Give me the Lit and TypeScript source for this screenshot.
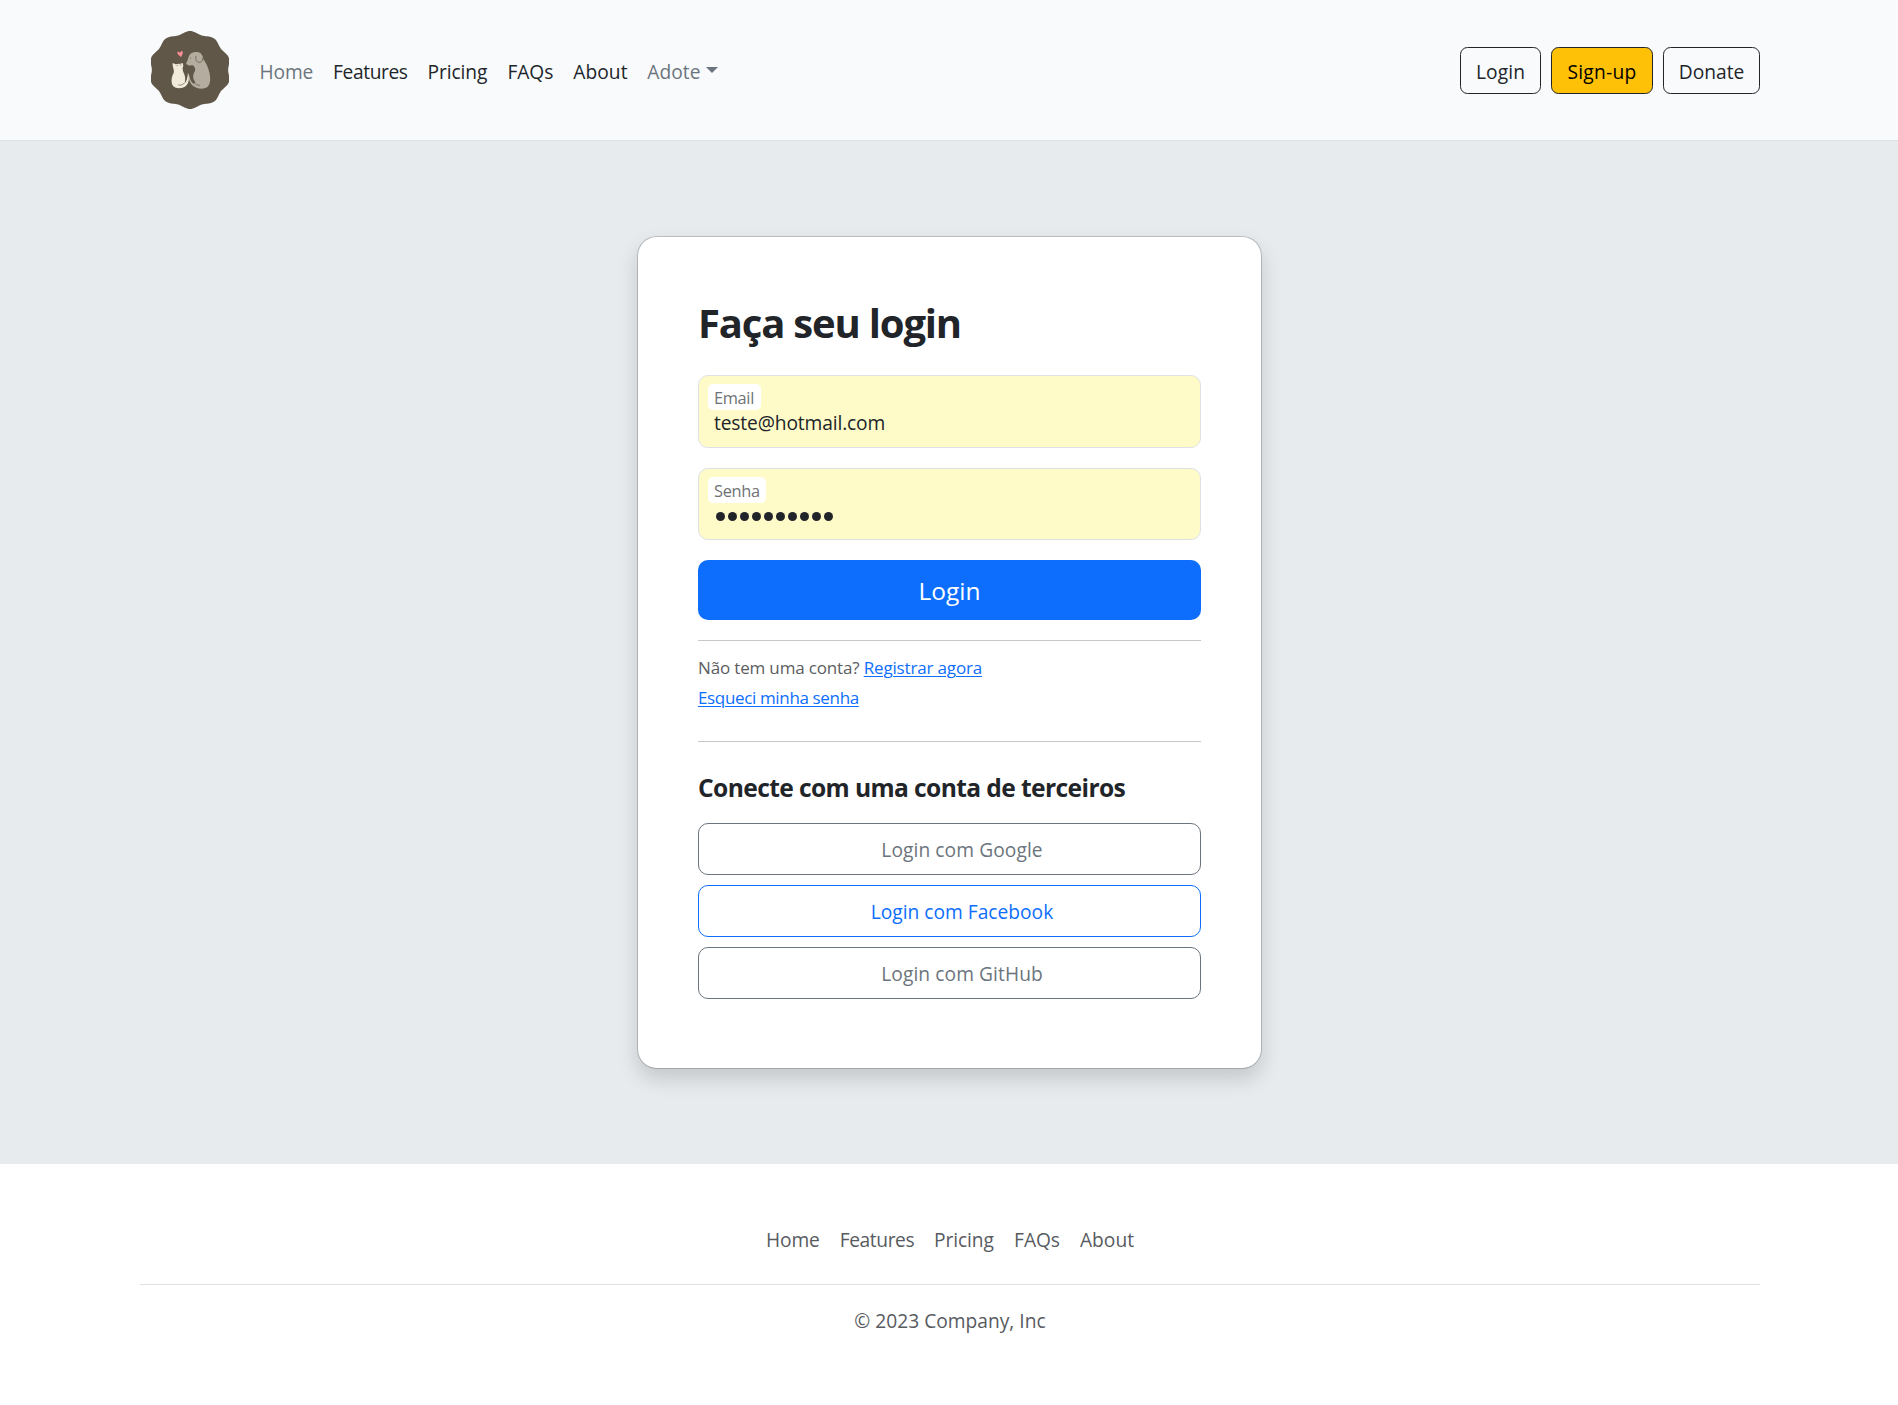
import { LitElement, html, svg, css } from "lit";
import { customElement } from "lit/decorators.js";

// Outline of the ten-lobed badge, centred on (150, 150) and slightly wider than a circle.
const badge = (() => {
  const points: string[] = [];
  for (let i = 0; i < 180; i++) {
    const t = (i / 180) * Math.PI * 2;
    const r = 113 + 4 * Math.cos(10 * t);
    points.push(`${(150 + 1.05 * r * Math.sin(t)).toFixed(2)},${(150 - r * Math.cos(t)).toFixed(2)}`);
  }
  return points.join(" ");
})();

@customElement("pet-logo")
export class PetLogo extends LitElement {
  static styles = css`
    :host { display: block; width: 78px; height: 78px; }
    svg { display: block; width: 78px; height: 78px; }
  `;
  render() {
    return html`<svg viewBox="33 33 234 234" aria-hidden="true">
      ${svg`
        <polygon points=${badge} fill="#605749"></polygon>
        <path fill="#fd8d97" d="M123 112 C119 106 112 103 112 98 C112 94 118 94 120 99 C122 93 126 91 128 95 C130 101 125 106 123 112Z"></path>
        <path fill="#b5aca0" d="M138 128 C144 124 144 113 148 106 C154 96 166 94 176 97 C185 100 189 108 190 118 C198 128 204 142 208 157 C213 178 211 194 201 202 C194 207 180 207 171 204 C154 199 144 182 145 160 C149 165 149 180 157 188 C161 192 165 191 166 187 C157 175 158 164 165 153 C167 146 164 140 158 136 C151 137 140 137 138 128Z"></path>
        <path fill="none" stroke="#605749" stroke-width="2.2" d="M168 108 C165 118 170 127 177 127 C184 128 188 122 188 114"></path>
        <path fill="none" stroke="#605749" stroke-width="2" d="M160 180 C162 192 171 196 180 196"></path>
        <circle cx="152" cy="114" r="1.5" fill="#605749"></circle>
        <circle cx="139" cy="125" r="2" fill="#605749"></circle>
        <path fill="#f1e9da" d="M98 129 L105 132 C110 134 115 130 119 132 L128 129 L130 138 C127 142 127 150 131 158 C136 168 137 178 134 190 C141 183 142 174 144 159 C149 174 147 190 137 199 C127 207 107 207 100 199 C92 189 94 171 101 159 C104 150 97 143 98 129Z"></path>
        <path fill="none" stroke="#605749" stroke-width="2" d="M134 188 C129 195 122 196 115 195"></path>
        <path fill="none" stroke="#605749" stroke-width="1.8" d="M110 137 L114 136 M119 134 L124 136"></path>
      `}
    </svg>`;
  }
}

@customElement("app-root")
export class AppRoot extends LitElement {
  static styles = css`
    :host {
      display: block;
      height: 1405px;
      overflow: hidden;
      background: #fff;
      color: #212529;
      font: 400 19.2px/30px "Open Sans", "Noto Sans", sans-serif;
    }
    * { box-sizing: border-box; }
    a { color: inherit; text-decoration: none; }
    h1, h2, p { margin: 0; }
    .header {
      height: 141px;
      padding: 0 138px 0 151px;
      display: flex;
      align-items: center;
      background: #f8fafc;
      border-bottom: 1px solid #dee2e6;
    }
    .nav { display: flex; margin-left: 20.5px; padding-top: 3px; white-space: nowrap; }
    .nav a { padding: 0 10px; }
    .muted { color: #6c757d; }
    .w-home { width: 73.6px; letter-spacing: -0.15px; }
    .w-features { width: 94.4px; letter-spacing: -0.4px; }
    .w-pricing { width: 80px; letter-spacing: -0.1px; }
    .w-faqs { width: 65.8px; letter-spacing: -0.1px; }
    .w-about { width: 74px; letter-spacing: 0.05px; }
    .w-adote { display: flex; letter-spacing: 0.05px; }
    .caret {
      margin: 10px 0 0 5px;
      width: 12px;
      height: 6px;
      border: 6px solid transparent;
      border-top-color: #6c757d;
      border-bottom: 0;
    }
    .actions { display: flex; gap: 10px; margin-left: auto; }
    .btn {
      display: flex;
      align-items: center;
      justify-content: center;
      border: 1px solid #212529;
      border-radius: 7.5px;
      background: none;
      color: #212529;
      padding: 3px 0 0;
      font: inherit;
      height: 47px;
      white-space: nowrap;
    }
    .b-login { width: 81px; letter-spacing: 0.1px; }
    .b-signup { width: 102px; background: #ffc107; color: #000; letter-spacing: 0.25px; }
    .b-donate { width: 97px; }
    .main {
      height: 1023px;
      padding: 95px 0 0 1px;
      display: flex;
      justify-content: center;
      align-items: flex-start;
      background: #e7ebee;
    }
    .card {
      width: 625px;
      height: 832.5px;
      padding: 60px;
      background: #fff;
      background-clip: padding-box;
      border: 1px solid rgba(0, 0, 0, 0.175);
      border-radius: 20px;
      box-shadow: 0 10px 20px rgba(0, 0, 0, 0.15);
    }
    h1 { font-size: 40px; font-weight: 700; line-height: 52px; height: 78px; white-space: nowrap; letter-spacing: -1.18px; }
    .field {
      display: flex;
      flex-direction: column;
      align-items: flex-start;
      padding: 8px 0 0 9px;
      border: 1px solid #dee2e6;
      border-radius: 10px;
      background: #fffbc8;
      margin-bottom: 20px;
    }
    .email { height: 73px; }
    .senha { height: 72px; }
    .label {
      height: 26px;
      padding: 1px 0 0 6px;
      border-radius: 5px;
      background: #fff;
      color: #6f7275;
      font-size: 16.4px;
      line-height: 26px;
      white-space: nowrap;
    }
    .email .label { width: 53px; letter-spacing: -0.35px; }
    .senha .label { width: 58px; letter-spacing: -0.3px; }
    .value { padding-left: 6px; line-height: 26px; letter-spacing: -0.13px; }
    .dots { display: flex; gap: 3.1px; padding: 9px 0 0 7.5px; }
    .dot { width: 9px; height: 9px; border-radius: 50%; background: #212529; }
    .submit {
      display: block;
      width: 100%;
      height: 60px;
      border: 0;
      border-radius: 10px;
      background: #0d6efd;
      color: #fff;
      font: 400 24.5px/38px "Open Sans", "Noto Sans", sans-serif;
      padding: 1px 0 0;
    }
    .rule { height: 1px; background: #c7c8c9; }
    .rule.first { margin-top: 20px; }
    .small { padding-top: 12px; height: 100px; font-size: 17px; line-height: 30px; color: #5b5d60; white-space: nowrap; }
    .small a { color: #0d6efd; text-decoration: underline; text-decoration-thickness: 1px; text-underline-offset: 2px; }
    .l1 { letter-spacing: -0.16px; }
    .l2 { letter-spacing: -0.35px; }
    h2 { font-size: 24.6px; font-weight: 700; line-height: 30px; padding-top: 31px; height: 81px; white-space: nowrap; letter-spacing: -0.61px; }
    .social { display: flex; flex-direction: column; gap: 10px; }
    .social .btn { width: 100%; height: 52px; border-radius: 10px; border-color: #6c757d; color: #6c757d; padding: 1px 0 0 25px; letter-spacing: 0.08px; }
    .social .blue { border-color: #0d6efd; color: #0d6efd; letter-spacing: 0; }
    .footer { padding: 60px 138px 0 140px; color: #585b5f; }
    .links { display: flex; justify-content: center; height: 61px; padding-top: 1px; border-bottom: 1px solid #dee2e6; white-space: nowrap; }
    .links a { padding: 0 10px; }
    .copy { text-align: center; padding-top: 21px; }
  `;

  render() {
    return html`
      <header class="header">
        <pet-logo></pet-logo>
        <nav class="nav">
          <a class="w-home muted" href="#">Home</a>
          <a class="w-features" href="#">Features</a>
          <a class="w-pricing" href="#">Pricing</a>
          <a class="w-faqs" href="#">FAQs</a>
          <a class="w-about" href="#">About</a>
          <a class="w-adote muted" href="#">Adote<span class="caret"></span></a>
        </nav>
        <div class="actions">
          <button class="btn b-login">Login</button>
          <button class="btn b-signup">Sign-up</button>
          <button class="btn b-donate">Donate</button>
        </div>
      </header>
      <main class="main">
        <section class="card">
          <h1>Faça seu login</h1>
          <div class="field email">
            <span class="label">Email</span>
            <span class="value">teste@hotmail.com</span>
          </div>
          <div class="field senha">
            <span class="label">Senha</span>
            <span class="dots">${Array.from({ length: 10 }, () => html`<span class="dot"></span>`)}</span>
          </div>
          <button class="submit">Login</button>
          <div class="rule first"></div>
          <div class="small">
            <p class="l1">Não tem uma conta? <a href="#">Registrar agora</a></p>
            <p class="l2"><a href="#">Esqueci minha senha</a></p>
          </div>
          <div class="rule"></div>
          <h2>Conecte com uma conta de terceiros</h2>
          <div class="social">
            <button class="btn google">Login com Google</button>
            <button class="btn blue">Login com Facebook</button>
            <button class="btn github">Login com GitHub</button>
          </div>
        </section>
      </main>
      <footer class="footer">
        <nav class="links">
          <a class="w-home" href="#">Home</a>
          <a class="w-features" href="#">Features</a>
          <a class="w-pricing" href="#">Pricing</a>
          <a class="w-faqs" href="#">FAQs</a>
          <a class="w-about" href="#">About</a>
        </nav>
        <p class="copy">© 2023 Company, Inc</p>
      </footer>
    `;
  }
}
